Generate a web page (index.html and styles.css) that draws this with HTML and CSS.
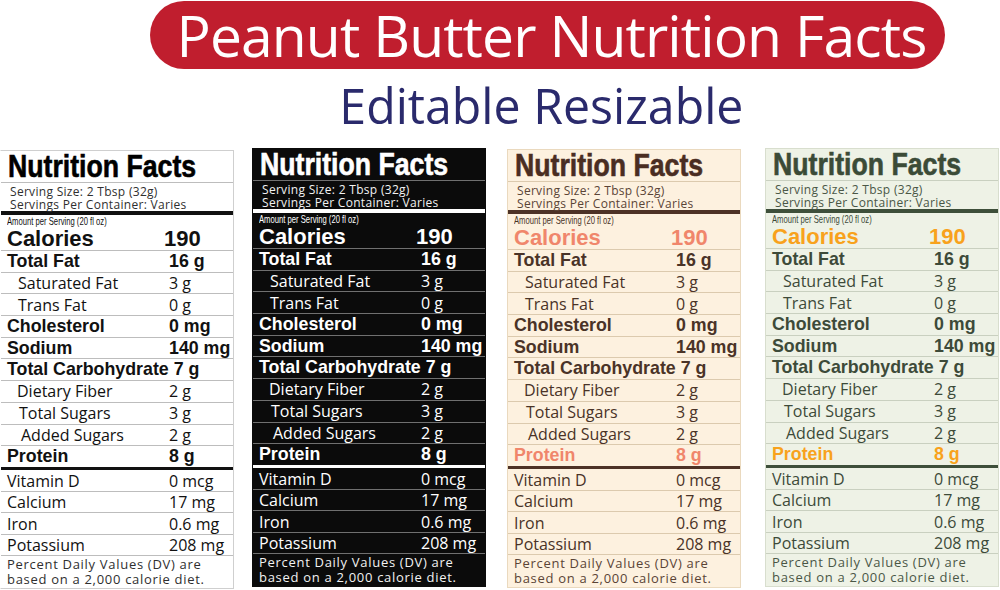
FILE: index.html
```html
<!DOCTYPE html>
<html lang="en">
<head>
<meta charset="utf-8">
<title>Peanut Butter Nutrition Facts</title>
<link rel="stylesheet" href="styles.css">
</head>
<body>
<header class="head">
  <h1 class="banner">Peanut Butter Nutrition Facts</h1>
  <p class="sub"><span>Editable Resizable</span></p>
</header>
<main class="labels">
  <section class="nf nf-white">
    <div class="nf-title"><span>Nutrition Facts</span></div>
    <div class="serving"><div>Serving Size: 2 Tbsp (32g)</div><div>Servings Per Container: Varies</div></div>
    <div class="thick"></div>
    <div class="amount"><span>Amount per Serving (20 fl oz)</span></div>
    <div class="cal"><span class="n">Calories</span><span class="v">190</span></div>
    <div class="row b"><span class="n">Total Fat</span><span class="v">16 g</span></div>
    <div class="row"><span class="n i1">Saturated Fat</span><span class="v">3 g</span></div>
    <div class="row"><span class="n i1">Trans Fat</span><span class="v">0 g</span></div>
    <div class="row b"><span class="n">Cholesterol</span><span class="v">0 mg</span></div>
    <div class="row b"><span class="n">Sodium</span><span class="v">140 mg</span></div>
    <div class="row b"><span class="n">Total Carbohydrate 7 g</span></div>
    <div class="row"><span class="n i2">Dietary Fiber</span><span class="v">2 g</span></div>
    <div class="row"><span class="n i3">Total Sugars</span><span class="v">3 g</span></div>
    <div class="row"><span class="n i4">Added Sugars</span><span class="v">2 g</span></div>
    <div class="row b accent"><span class="n">Protein</span><span class="v">8 g</span></div>
    <div class="thick thick-2"></div>
    <div class="row vit"><span class="n">Vitamin D</span><span class="v">0 mcg</span></div>
    <div class="row vit"><span class="n">Calcium</span><span class="v">17 mg</span></div>
    <div class="row vit"><span class="n">Iron</span><span class="v">0.6 mg</span></div>
    <div class="row vit"><span class="n">Potassium</span><span class="v">208 mg</span></div>
    <div class="foot"><div>Percent Daily Values (DV) are</div><div>based on a 2,000 calorie diet.</div></div>
  </section>

  <section class="nf nf-black">
    <div class="nf-title"><span>Nutrition Facts</span></div>
    <div class="serving"><div>Serving Size: 2 Tbsp (32g)</div><div>Servings Per Container: Varies</div></div>
    <div class="thick"></div>
    <div class="amount"><span>Amount per Serving (20 fl oz)</span></div>
    <div class="cal"><span class="n">Calories</span><span class="v">190</span></div>
    <div class="row b"><span class="n">Total Fat</span><span class="v">16 g</span></div>
    <div class="row"><span class="n i1">Saturated Fat</span><span class="v">3 g</span></div>
    <div class="row"><span class="n i1">Trans Fat</span><span class="v">0 g</span></div>
    <div class="row b"><span class="n">Cholesterol</span><span class="v">0 mg</span></div>
    <div class="row b"><span class="n">Sodium</span><span class="v">140 mg</span></div>
    <div class="row b"><span class="n">Total Carbohydrate 7 g</span></div>
    <div class="row"><span class="n i2">Dietary Fiber</span><span class="v">2 g</span></div>
    <div class="row"><span class="n i3">Total Sugars</span><span class="v">3 g</span></div>
    <div class="row"><span class="n i4">Added Sugars</span><span class="v">2 g</span></div>
    <div class="row b accent"><span class="n">Protein</span><span class="v">8 g</span></div>
    <div class="thick thick-2"></div>
    <div class="row vit"><span class="n">Vitamin D</span><span class="v">0 mcg</span></div>
    <div class="row vit"><span class="n">Calcium</span><span class="v">17 mg</span></div>
    <div class="row vit"><span class="n">Iron</span><span class="v">0.6 mg</span></div>
    <div class="row vit"><span class="n">Potassium</span><span class="v">208 mg</span></div>
    <div class="foot"><div>Percent Daily Values (DV) are</div><div>based on a 2,000 calorie diet.</div></div>
  </section>

  <section class="nf nf-cream">
    <div class="nf-title"><span>Nutrition Facts</span></div>
    <div class="serving"><div>Serving Size: 2 Tbsp (32g)</div><div>Servings Per Container: Varies</div></div>
    <div class="thick"></div>
    <div class="amount"><span>Amount per Serving (20 fl oz)</span></div>
    <div class="cal"><span class="n">Calories</span><span class="v">190</span></div>
    <div class="row b"><span class="n">Total Fat</span><span class="v">16 g</span></div>
    <div class="row"><span class="n i1">Saturated Fat</span><span class="v">3 g</span></div>
    <div class="row"><span class="n i1">Trans Fat</span><span class="v">0 g</span></div>
    <div class="row b"><span class="n">Cholesterol</span><span class="v">0 mg</span></div>
    <div class="row b"><span class="n">Sodium</span><span class="v">140 mg</span></div>
    <div class="row b"><span class="n">Total Carbohydrate 7 g</span></div>
    <div class="row"><span class="n i2">Dietary Fiber</span><span class="v">2 g</span></div>
    <div class="row"><span class="n i3">Total Sugars</span><span class="v">3 g</span></div>
    <div class="row"><span class="n i4">Added Sugars</span><span class="v">2 g</span></div>
    <div class="row b accent"><span class="n">Protein</span><span class="v">8 g</span></div>
    <div class="thick thick-2"></div>
    <div class="row vit"><span class="n">Vitamin D</span><span class="v">0 mcg</span></div>
    <div class="row vit"><span class="n">Calcium</span><span class="v">17 mg</span></div>
    <div class="row vit"><span class="n">Iron</span><span class="v">0.6 mg</span></div>
    <div class="row vit"><span class="n">Potassium</span><span class="v">208 mg</span></div>
    <div class="foot"><div>Percent Daily Values (DV) are</div><div>based on a 2,000 calorie diet.</div></div>
  </section>

  <section class="nf nf-green">
    <div class="nf-title"><span>Nutrition Facts</span></div>
    <div class="serving"><div>Serving Size: 2 Tbsp (32g)</div><div>Servings Per Container: Varies</div></div>
    <div class="thick"></div>
    <div class="amount"><span>Amount per Serving (20 fl oz)</span></div>
    <div class="cal"><span class="n">Calories</span><span class="v">190</span></div>
    <div class="row b"><span class="n">Total Fat</span><span class="v">16 g</span></div>
    <div class="row"><span class="n i1">Saturated Fat</span><span class="v">3 g</span></div>
    <div class="row"><span class="n i1">Trans Fat</span><span class="v">0 g</span></div>
    <div class="row b"><span class="n">Cholesterol</span><span class="v">0 mg</span></div>
    <div class="row b"><span class="n">Sodium</span><span class="v">140 mg</span></div>
    <div class="row b"><span class="n">Total Carbohydrate 7 g</span></div>
    <div class="row"><span class="n i2">Dietary Fiber</span><span class="v">2 g</span></div>
    <div class="row"><span class="n i3">Total Sugars</span><span class="v">3 g</span></div>
    <div class="row"><span class="n i4">Added Sugars</span><span class="v">2 g</span></div>
    <div class="row b accent"><span class="n">Protein</span><span class="v">8 g</span></div>
    <div class="thick thick-2"></div>
    <div class="row vit"><span class="n">Vitamin D</span><span class="v">0 mcg</span></div>
    <div class="row vit"><span class="n">Calcium</span><span class="v">17 mg</span></div>
    <div class="row vit"><span class="n">Iron</span><span class="v">0.6 mg</span></div>
    <div class="row vit"><span class="n">Potassium</span><span class="v">208 mg</span></div>
    <div class="foot"><div>Percent Daily Values (DV) are</div><div>based on a 2,000 calorie diet.</div></div>
  </section>
</main>
</body>
</html>
```
FILE: styles.css
```css
* { box-sizing: border-box; }
html, body { margin: 0; padding: 0; }
body {
  width: 1000px;
  height: 590px;
  overflow: hidden;
  background: #fff;
  font-family: "Open Sans", "Liberation Sans", sans-serif;
}

/* header */
.head {
  width: 795px;
  margin-left: 150px;
}
.banner {
  margin: 1px 0 0;
  height: 68px;
  padding-left: 8px;
  border-radius: 34px;
  background: #c01e2e;
  color: #fff;
  font-weight: 400;
  font-size: 57px;
  letter-spacing: -0.9px;
  line-height: 68px;
  text-align: center;
  white-space: nowrap;
}
.sub {
  margin: 1px 0 0 -12px;
  height: 74px;
  color: #2a2a6c;
  font-size: 50px;
  line-height: 70px;
  text-align: center;
  white-space: nowrap;
}
.sub span {
  display: inline-block;
  transform: scaleX(0.965);
  transform-origin: center;
}

/* labels row */
.labels {
  display: flex;
  align-items: flex-start;
  margin-top: 3px;
}
.nf {
  --bg: #fff; --fg: #111; --title: #000; --line: #bdbdbd; --thick: #111;
  --accent: #111; --border: #cfcfcf; --soft: #2f2f2f;
  width: 234px;
  flex: none;
  background: var(--bg);
  color: var(--fg);
  border: 1px solid var(--border);
}
.nf-white { margin-top: 3px; border-left-color: transparent; }
.nf-black {
  --bg: #0b0b0b; --fg: #fff; --title: #fff; --line: #707070; --thick: #fff;
  --accent: #fff; --border: #0b0b0b; --soft: #f2f2f2;
  margin-left: 18px; margin-top: 1px;
}
.nf-cream {
  --bg: #fdf1df; --fg: #4a3327; --title: #4a2d22; --line: #dccaae; --thick: #4d3226;
  --accent: #f0866b; --border: #ead9be; --soft: #5a4436;
  margin-left: 21px; margin-top: 2px;
}
.nf-green {
  --bg: #eef2e6; --fg: #3d4a39; --title: #3b4b37; --line: #c9d0c0; --thick: #3e4f3a;
  --accent: #f8a21c; --border: #d8dece; --soft: #4a5746;
  margin-left: 24px; margin-top: 1px;
}

.nf-title {
  height: 32px;
  padding-left: 7px;
  border-bottom: 1px solid var(--line);
  color: var(--title);
  font-family: "Liberation Sans", Arial, sans-serif;
  font-weight: 700;
  font-size: 31px;
  line-height: 32px;
  white-space: nowrap;
}
.nf-title span {
  display: inline-block;
  transform: scaleX(0.86);
  transform-origin: left center;
  -webkit-text-stroke: 0.6px currentColor;
}
.serving {
  height: 28px;
  padding: 3px 0 0 9px;
  color: var(--soft);
  font-size: 12px;
  letter-spacing: 0.3px;
  line-height: 12.5px;
  white-space: nowrap;
}
.thick { height: 4px; background: var(--thick); }
.thick-2 { height: 3px; }

.amount {
  height: 12px;
  padding: 1px 0 0 6px;
  font-family: "Liberation Sans", Arial, sans-serif;
  font-size: 10.5px;
  line-height: 11px;
  white-space: nowrap;
}
.amount span {
  display: inline-block;
  transform: scaleX(0.73);
  transform-origin: left center;
}
.cal {
  display: flex;
  height: 23px;
  padding-left: 6px;
  color: var(--accent);
  font-family: "Liberation Sans", Arial, sans-serif;
  font-weight: 700;
  font-size: 22px;
  line-height: 23px;
}
.cal .n { flex: 0 0 157px; }

.row {
  display: flex;
  align-items: center;
  height: 21.7px;
  padding-left: 6px;
  border-top: 1px solid var(--line);
  font-size: 16px;
  white-space: nowrap;
}
.row .n { flex: 0 0 162px; box-sizing: border-box; }
.row.b {
  font-family: "Liberation Sans", Arial, sans-serif;
  font-weight: 700;
  font-size: 17.8px;
}
.row.accent { color: var(--accent); }
.i1 { padding-left: 11px; }
.i2 { padding-left: 10px; }
.i3 { padding-left: 12px; }
.i4 { padding-left: 14px; }
.row.vit { height: 21.25px; }
.thick + .row { border-top: 0; }

.foot {
  height: 33px;
  padding: 1px 0 0 6px;
  border-top: 1px solid var(--line);
  color: var(--soft);
  font-size: 13px;
  letter-spacing: 0.7px;
  line-height: 15px;
  white-space: nowrap;
}
```
